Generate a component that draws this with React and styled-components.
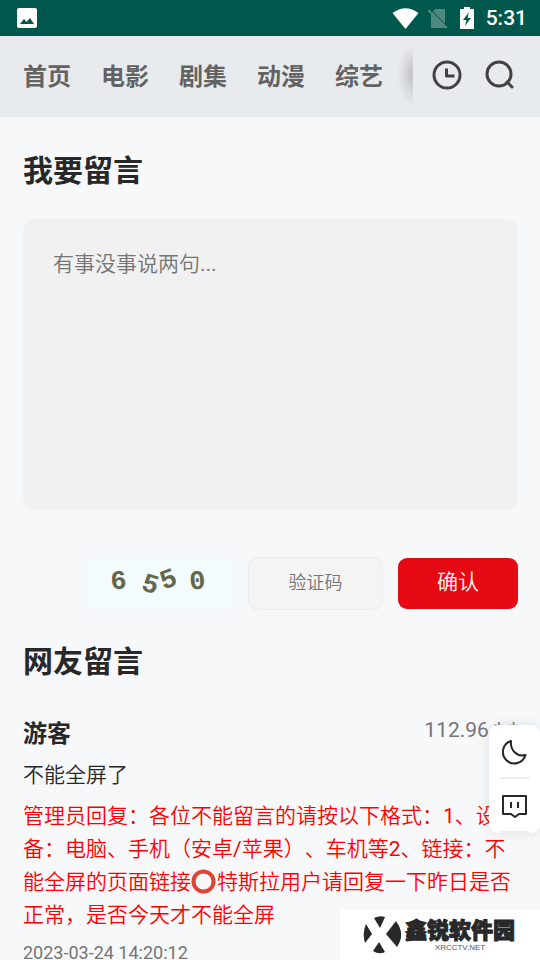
import { useState } from "react";
import styled, { createGlobalStyle } from "styled-components";

const textFont = `Roboto, "Noto Sans CJK SC DemiLight", "Noto Sans CJK SC", sans-serif`;

const GlobalStyle = createGlobalStyle`
  * {
    box-sizing: border-box;
  }

  html {
    scrollbar-width: none;
  }

  body {
    margin: 0;
    background-color: #f7f8fa;
    color: #282828;
    font-family: Roboto, "Noto Sans CJK SC", sans-serif;
    text-spacing-trim: space-all;
  }
`;

const StatusBar = styled.div`
  display: flex;
  align-items: center;
  height: 36px;
  padding: 0 13px 0 17px;
  background-color: #00574b;
  color: white;

  > svg.wifi {
    margin-left: auto;
  }

  > svg.sim {
    margin-left: 9px;
  }

  > svg.battery {
    margin: 0 11px 0 12px;
  }

  > span.time {
    font-size: 21px;
    line-height: 36px;
    font-weight: 500;
  }
`;

const Header = styled.header`
  display: flex;
  align-items: center;
  height: 81px;
  padding: 0 24px 0 23px;
  background-color: #e8ebee;
`;

const Menu = styled.nav`
  position: relative;
  display: flex;
  flex: 1;
  align-items: center;
  gap: 30px;
  height: 81px;
  overflow: hidden;

  > a {
    flex: none;
    color: #636363;
    font-size: 24px;
    line-height: 36px;
    font-weight: bold;
    text-decoration: none;
  }

  /* shade that hints at more items */
  &::after {
    content: "";
    position: absolute;
    top: 8px;
    right: 0;
    width: 16px;
    height: 62px;
    background: radial-gradient(
      ellipse at right center,
      rgba(0, 0, 0, 0.18),
      rgba(0, 0, 0, 0.07) 40%,
      rgba(0, 0, 0, 0) 70%
    );
  }
`;

const Tools = styled.div`
  display: flex;
  gap: 21px;
  padding-left: 18px;
`;

const IconButton = styled.button`
  display: block;
  height: 34px;
  padding: 0 0 2px;
  border: none;
  background: none;
  cursor: pointer;

  > svg {
    display: block;
  }
`;

const Main = styled.main`
  padding: 31px 22px 0 23px;
`;

const Title = styled.h2`
  margin: 0;
  font-size: 30px;
  line-height: 46px;
  font-weight: bold;
`;

const MessageBox = styled.textarea`
  display: block;
  width: 100%;
  height: 291px;
  margin-top: 25px;
  padding: 29px 30px;
  border: none;
  border-radius: 12px;
  outline: none;
  resize: none;
  background-color: #f1f1f1;
  color: #282828;
  font-family: ${textFont};
  font-size: 21px;
  line-height: 33px;

  &::placeholder {
    color: #757575;
  }
`;

const SubmitRow = styled.div`
  display: flex;
  align-items: center;
  justify-content: flex-end;
  gap: 15px;
  margin: 47px 0 29px;
`;

const Captcha = styled.svg`
  background-color: #f3fbff;
  fill: #62694a;
  font-family: "Liberation Mono", monospace;
  font-size: 27px;
  font-weight: bold;
  text-anchor: middle;
`;

const CodeInput = styled.input`
  width: 135px;
  height: 53px;
  padding: 0 15px 2px;
  border: 1px solid #ececec;
  border-radius: 9px;
  outline: none;
  background-color: #f4f4f4;
  font-family: ${textFont};
  font-size: 18px;
  text-align: center;

  &::placeholder {
    color: #757575;
  }
`;

const SubmitButton = styled.button`
  width: 120px;
  height: 51px;
  padding: 0 0 7px;
  border: none;
  border-radius: 9px;
  background-color: #e50914;
  color: white;
  font-family: ${textFont};
  font-size: 21px;
  cursor: pointer;
`;

const Comment = styled.article`
  padding-top: 31px;

  > header {
    display: flex;
    justify-content: space-between;
  }

  h3 {
    margin: 0;
    font-size: 24px;
    line-height: 36px;
  }

  span.ip {
    color: #757575;
    font-size: 21px;
    line-height: 28px;
  }

  > p {
    margin: 7px 0 0;
    font-family: ${textFont};
    font-size: 21px;
    line-height: 33px;
  }

  > p.reply {
    margin-top: 8px;
    color: #ff0000;
  }

  > time {
    display: block;
    margin-top: 7px;
    color: #757575;
    font-size: 18px;
    line-height: 27px;
  }
`;

const Ring = styled.svg`
  margin-right: 1px;
  vertical-align: -5px;
`;

const SideBar = styled.aside`
  position: fixed;
  right: 0;
  bottom: 127px;
  display: flex;
  flex-direction: column;
  align-items: center;
  width: 51px;
  border-radius: 9px;
  background-color: white;
  box-shadow: 0 0 12px rgba(0, 0, 0, 0.1);
`;

const SideButton = styled.button`
  width: 30px;
  height: 54px;
  padding: 0;
  border: none;
  border-bottom: 2px solid #efefef;
  background: none;
  cursor: pointer;

  > svg {
    display: block;
    margin: 0 auto;
  }
`;

const SiteMark = styled.div`
  position: fixed;
  right: 0;
  bottom: 0;
  display: flex;
  align-items: center;
  gap: 4px;
  width: 200px;
  height: 50px;
  padding-left: 23px;
  background-color: white;
  color: #282828;
  text-align: center;

  div.name {
    font-size: 22px;
    line-height: 26px;
    font-weight: 900;
    -webkit-text-stroke: 1px #282828;
  }

  div.domain {
    color: #555555;
    font-family: "Liberation Sans", sans-serif;
    font-size: 8px;
    line-height: 8px;
  }
`;

const menus = ["首页", "电影", "剧集", "动漫", "综艺"];

export default function App() {
  const [message, setMessage] = useState("");
  const [code, setCode] = useState("");

  const handleSubmit = (e) => {
    e.preventDefault();
    setMessage("");
    setCode("");
  };

  return (
    <div>
      <GlobalStyle />
      <StatusBar>
        <svg width="20" height="20" viewBox="0 0 20 20">
          <rect width="20" height="20" rx="2" fill="#fff" />
          <path d="M3 16l4-5 2.5 3L13 10l4 6z" fill="#00574b" />
        </svg>
        <svg className="wifi" width="27" height="21" viewBox="0 0 27 21">
          <path d="M13.5 21L.5 5Q13.500-4.500 26.500 5z" fill="#fff" />
        </svg>
        <svg className="sim" width="20" height="21" viewBox="0 0 20 21">
          <path d="M7 1h10v19H3V6z" fill="#4d897f" />
          <path d="M2 1l18 18" stroke="#00574b" strokeWidth="1" />
          <path d="M0 2l19 18" stroke="#4d897f" strokeWidth="2" />
        </svg>
        <svg className="battery" width="15" height="22" viewBox="0 0 15 22">
          <path d="M4 0h6v2h4v20H0V2h4z" fill="#fff" />
          <path d="M9 5l-6 8h3.500L5 19l6-8H7.500z" fill="#00574b" />
        </svg>
        <span className="time">5:31</span>
      </StatusBar>

      <Header>
        <Menu>
          {menus.map((name) => (
            <a href="#" key={name}>
              {name}
            </a>
          ))}
        </Menu>
        <Tools>
          <IconButton aria-label="history">
            <svg width="32" height="32" fill="none" stroke="#424242" strokeWidth="3">
              <circle cx="16" cy="15" r="13" />
              <path d="M15.500 8.500v7.500h8" strokeLinejoin="round" />
            </svg>
          </IconButton>
          <IconButton aria-label="search">
            <svg width="32" height="32" fill="none" stroke="#424242" strokeWidth="3">
              <circle cx="15" cy="14" r="12" />
              <path d="M23 22l5 5" strokeLinecap="round" />
            </svg>
          </IconButton>
        </Tools>
      </Header>

      <Main>
        <form onSubmit={handleSubmit}>
          <Title>我要留言</Title>
          <MessageBox
            aria-label="我要留言"
            placeholder="有事没事说两句..."
            value={message}
            onChange={(e) => setMessage(e.target.value)}
          />
          <SubmitRow>
            <Captcha width="147" height="52">
              <text transform="translate(33 31) rotate(-4)">6</text>
              <text transform="translate(62 34) rotate(17)">5</text>
              <text transform="translate(85 29) rotate(-20)">5</text>
              <text transform="translate(112 31) rotate(-5)">0</text>
            </Captcha>
            <CodeInput
              aria-label="验证码"
              placeholder="验证码"
              value={code}
              onChange={(e) => setCode(e.target.value)}
            />
            <SubmitButton>确认</SubmitButton>
          </SubmitRow>
        </form>

        <Title>网友留言</Title>
        <Comment>
          <header>
            <h3>游客</h3>
            <span className="ip">112.96.*.*</span>
          </header>
          <p>不能全屏了</p>
          <p className="reply">
            管理员回复：各位不能留言的请按以下格式：1、设备：电脑、手机（安卓/苹果）、车机等2、链接：不能全屏的页面链接
            <Ring width="25" height="25" viewBox="0 0 25 25">
              <circle cx="12.500" cy="12.500" r="10" fill="none" stroke="#db4437" strokeWidth="4" />
            </Ring>
            特斯拉用户请回复一下昨日是否正常，是否今天才不能全屏
          </p>
          <time>2023-03-24 14:20:12</time>
        </Comment>
      </Main>

      <SideBar>
        <SideButton aria-label="dark mode">
          <svg width="28" height="28" viewBox="0 -2 28 28" fill="none" stroke="#282828" strokeWidth="2">
            <path
              d="M10 2A11.500 11.500 0 1 0 24.500 16C16 18.500 9 11 10 2z"
              strokeLinejoin="round"
            />
          </svg>
        </SideButton>
        <SideButton aria-label="message">
          <svg width="28" height="28" viewBox="0 -2 28 28" fill="none" stroke="#282828" strokeWidth="2">
            <path d="M2 3h23v18h-7l-4 3-4-3H2z" strokeLinejoin="round" />
            <path d="M10 9v6M17 9v6" />
          </svg>
        </SideButton>
      </SideBar>

      <SiteMark>
        <svg width="38" height="38" viewBox="0 0 38 38" fill="#282828">
          <path d="M11 2Q17-1 22 1L17 12z" />
          <path d="M3 8L9 18 2 27Q-1 17 3 8z" />
          <path d="M33 5Q43 18 34 31L23 18z" />
          <path d="M16 26L22 36Q16 39 10 35z" />
        </svg>
        <div>
          <div className="name">鑫锐软件园</div>
          <div className="domain">XRCCTV.NET</div>
        </div>
      </SiteMark>
    </div>
  );
}
